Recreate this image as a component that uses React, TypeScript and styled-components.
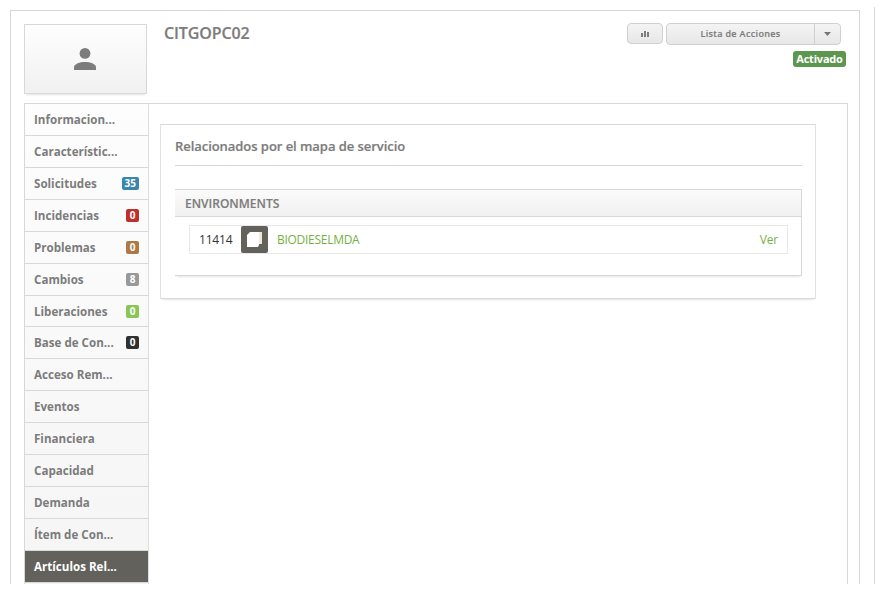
import React from "react";
import styled, { createGlobalStyle } from "styled-components";

const GlobalStyle = createGlobalStyle`
  * { box-sizing: border-box; }
  body {
    margin: 0;
    background: #fff;
    font-family: "Open Sans", "Liberation Sans", sans-serif;
    color: #7c7c7c;
    overflow: hidden;
  }
`;

const Page = styled.div`
  width: 875px;
  height: 584px;
  padding: 10px 0 0 10px;
  background: linear-gradient(#d8d8d8, #d8d8d8) right 7px / 1px 577px no-repeat;
`;

const Card = styled.main`
  width: 850px;
  height: 574px;
  padding: 13px 11px 0 13px;
  border: 1px solid #d8d8d8;
  border-bottom: 0;
`;

const Header = styled.header`
  display: flex;
  height: 79px;
`;

const Avatar = styled.div`
  display: flex;
  align-items: center;
  justify-content: center;
  width: 123px;
  height: 70px;
  padding-right: 1px;
  border: 1px solid #d8d8d8;
  background: linear-gradient(#fefefe, #f1f1f1);
  box-shadow: 0 3px 2px -2px #e4e4e4;
`;

const Title = styled.h1`
  flex: 1;
  margin: -2px 0 0 17px;
  font-size: 16px;
  line-height: 22px;
  font-weight: 600;
  letter-spacing: -0.1px;
  -webkit-text-stroke: 0.2px #7c7c7c;
`;

const Controls = styled.div`
  display: flex;
  flex-direction: column;
  align-items: flex-end;
  margin: -1px 2px 0 0;
`;

const ButtonRow = styled.div`
  display: flex;
  align-items: flex-start;
  gap: 3px;
  margin-right: 5px;
`;

const Button = styled.button`
  display: flex;
  align-items: center;
  justify-content: center;
  width: 36px;
  height: 21px;
  padding: 0;
  border: 1px solid #d0d0d0;
  border-radius: 4px;
  background: linear-gradient(#f4f4f4, #e7e7e7);
`;

const SplitButton = styled.div`
  display: flex;
  width: 175px;
  height: 22px;
  border: 1px solid #d0d0d0;
  border-radius: 4px;
  background: linear-gradient(#f4f4f4, #e7e7e7);
`;

const ActionLabel = styled.span`
  flex: 1;
  border-right: 1px solid #d0d0d0;
  font-size: 9px;
  line-height: 19px;
  font-weight: 600;
  letter-spacing: 0.35px;
  text-align: center;
  -webkit-text-stroke: 0.15px #7c7c7c;
`;

const Arrow = styled.span`
  display: flex;
  align-items: center;
  justify-content: center;
  width: 25px;
`;

const Status = styled.span`
  width: 53px;
  height: 16px;
  margin-top: 6px;
  border-radius: 3px;
  background: #5d974f;
  color: #fff;
  font-size: 11px;
  line-height: 16px;
  font-weight: 700;
  letter-spacing: -0.2px;
  text-align: center;
`;

const Body = styled.div`
  display: flex;
  align-items: flex-start;
  width: 824px;
  height: 481px;
  border: 1px solid #d8d8d8;
  border-bottom: 0;
`;

const Sidebar = styled.nav`
  width: 124px;
  height: 480px;
  border-right: 1px solid #dcdcdc;
  background: linear-gradient(#fdfdfd, #f5f5f5);
`;

const NavItem = styled.a<{ $active?: boolean; $short?: boolean }>`
  display: flex;
  align-items: center;
  justify-content: space-between;
  height: ${(p) => (p.$short ? 31 : 32)}px;
  padding: 0 9px;
  border-bottom: 1px solid #d8d8d8;
  background: ${(p) => (p.$active ? "#62615c" : "transparent")};
  color: ${(p) => (p.$active ? "#fff" : "#7c7c7c")};
  font-size: 11.6px;
  font-weight: 700;
  white-space: nowrap;
`;

const Badge = styled.span<{ $color: string }>`
  min-width: 13px;
  height: 13px;
  padding: 0 3px;
  border-radius: 2px;
  background: ${(p) => p.$color};
  color: #fff;
  font-size: 10px;
  line-height: 13px;
  text-align: center;
`;

const Panel = styled.section`
  width: 656px;
  height: 175px;
  margin: 20px 0 0 11px;
  padding: 0 13px 0 14px;
  border: 1px solid #d8d8d8;
  border-left-color: #e2e2e2;
  border-right-color: #e2e2e2;
  box-shadow: 0 3px 2px -2px #e4e4e4;
`;

const PanelTitle = styled.h2`
  height: 41px;
  margin: 0 0 23px;
  border-bottom: 1px solid #d8d8d8;
  font-size: 13px;
  line-height: 42px;
  font-weight: 600;
  letter-spacing: -0.05px;
  -webkit-text-stroke: 0.2px #7c7c7c;
`;

const Group = styled.div`
  width: 627px;
  height: 87px;
  border: 1px solid #d8d8d8;
  border-left: 0;
  box-shadow: 0 3px 2px -2px #e4e4e4;
`;

const GroupTitle = styled.h3`
  height: 27px;
  margin: 0 0 8px;
  padding-left: 10px;
  border-bottom: 1px solid #d8d8d8;
  background: linear-gradient(#fbfbfb, #f0f0f0);
  font-size: 12px;
  line-height: 27px;
  font-weight: 600;
  -webkit-text-stroke: 0.15px #7c7c7c;
`;

const Item = styled.div`
  display: flex;
  align-items: center;
  width: 599px;
  height: 29px;
  margin-left: 14px;
  padding: 0 9px;
  border: 1px solid #e8e8e8;
  font-size: 12px;
`;

const ItemId = styled.span`
  width: 42px;
  color: #333;
  letter-spacing: -0.2px;
`;

const IconTile = styled.span`
  display: flex;
  align-items: center;
  justify-content: center;
  width: 27px;
  height: 27px;
  margin-right: 9px;
  border-radius: 2px;
  background: #62615c;
`;

const Link = styled.a<{ $tight?: boolean }>`
  color: #76b043;
  letter-spacing: ${(p) => (p.$tight ? "-0.28px" : "-0.2px")};
`;

const Spacer = styled.span`
  flex: 1;
`;

const navItems: { label: string; count?: string; color?: string; active?: boolean; short?: boolean }[] = [
  { label: "Informacion..." },
  { label: "Característic..." },
  { label: "Solicitudes", count: "35", color: "#3a87ad" },
  { label: "Incidencias", count: "0", color: "#c12f2c" },
  { label: "Problemas", count: "0", color: "#ad7a45" },
  { label: "Cambios", count: "8", color: "#999999" },
  { label: "Liberaciones", count: "0", color: "#8ac656", short: true },
  { label: "Base de Con...", count: "0", color: "#303030" },
  { label: "Acceso Rem..." },
  { label: "Eventos" },
  { label: "Financiera" },
  { label: "Capacidad" },
  { label: "Demanda" },
  { label: "Ítem de Con..." },
  { label: "Artículos Rel...", active: true },
];

export default function App() {
  return (
    <>
      <GlobalStyle />
      <Page>
        <Card>
          <Header>
            <Avatar>
              <svg width="22" height="22" viewBox="0 0 22 22" fill="#7c7c7c">
                <circle cx="11" cy="5.4" r="5.4" />
                <path d="M0 22v-2.7c0-3.4 6-5.3 11-5.3s11 1.900 11 5.300V22z" />
              </svg>
            </Avatar>
            <Title>CITGOPC02</Title>
            <Controls>
              <ButtonRow>
                <Button aria-label="Estadísticas">
                  <svg width="8" height="6" viewBox="0 0 8 6" fill="#7c7c7c">
                    <path d="M0 2h2v4H0zM3 0h2v6H3zM6 1h2v5H6z" />
                  </svg>
                </Button>
                <SplitButton>
                  <ActionLabel>Lista de Acciones</ActionLabel>
                  <Arrow>
                    <svg width="7" height="4" viewBox="0 0 7 4" fill="#777">
                      <path d="M0 0h7L3.500 4z" />
                    </svg>
                  </Arrow>
                </SplitButton>
              </ButtonRow>
              <Status>Activado</Status>
            </Controls>
          </Header>
          <Body>
            <Sidebar>
              {navItems.map((item) => (
                <NavItem key={item.label} $active={item.active} $short={item.short}>
                  {item.label}
                  {item.count && <Badge $color={item.color!}>{item.count}</Badge>}
                </NavItem>
              ))}
            </Sidebar>
            <Panel>
              <PanelTitle>Relacionados por el mapa de servicio</PanelTitle>
              <Group>
                <GroupTitle>ENVIRONMENTS</GroupTitle>
                <Item>
                  <ItemId>11414</ItemId>
                  <IconTile>
                    <svg width="15" height="15" viewBox="0 0 15 15">
                      <path d="M4 0h11v12H4z" fill="#f1e8d6" />
                      <path d="M3 0h9v13l-1 2H0V3z" fill="#fff" />
                    </svg>
                  </IconTile>
                  <Link $tight>BIODIESELMDA</Link>
                  <Spacer />
                  <Link>Ver</Link>
                </Item>
              </Group>
            </Panel>
          </Body>
        </Card>
      </Page>
    </>
  );
}
